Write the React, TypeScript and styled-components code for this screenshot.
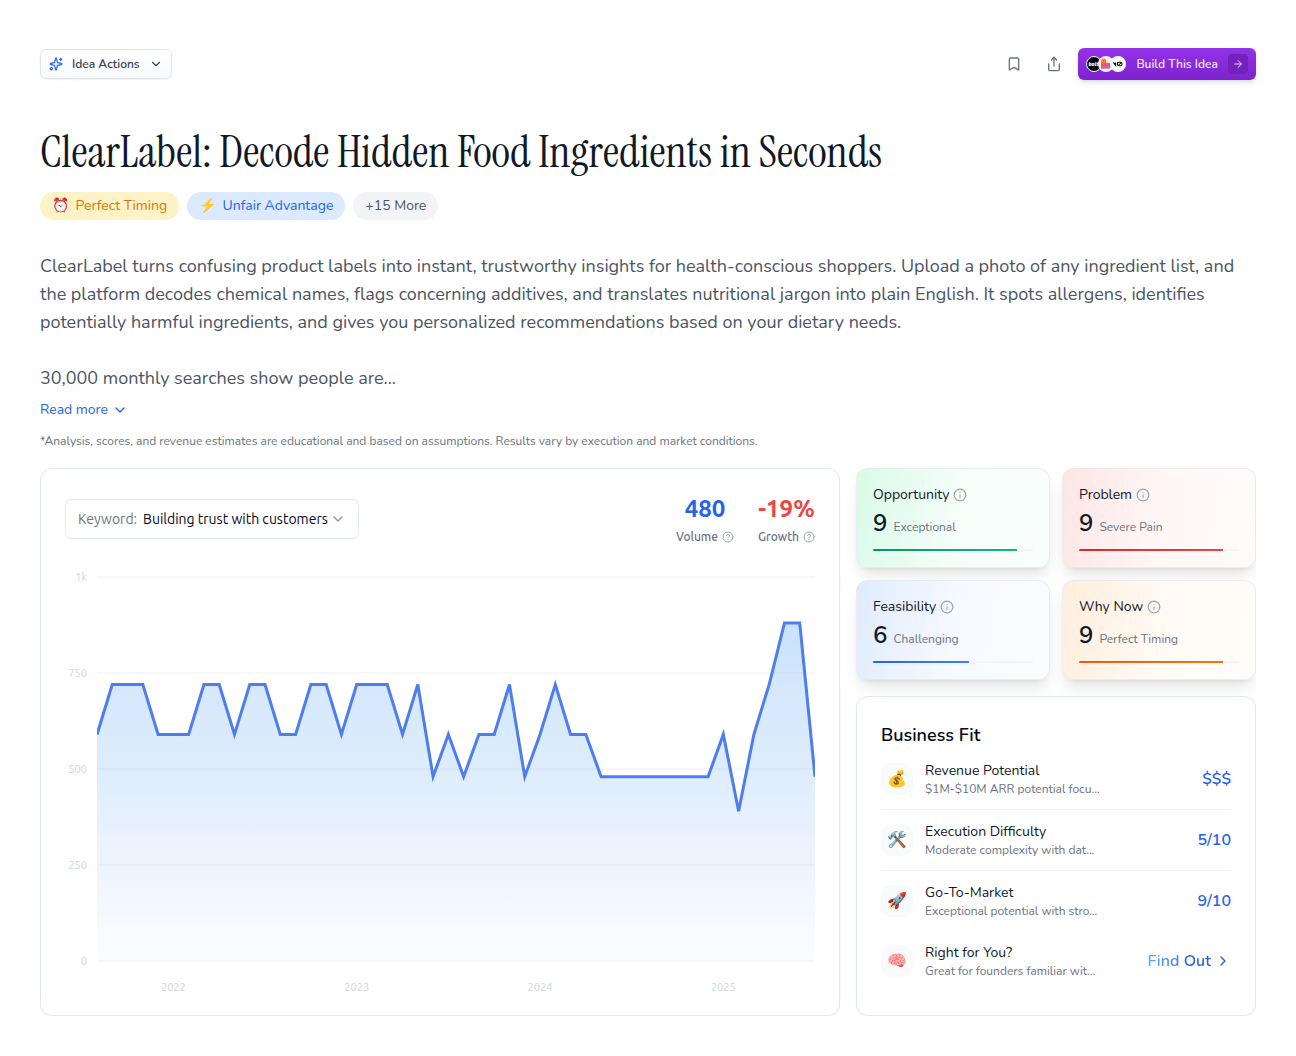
import React from "react";
import styled, { createGlobalStyle } from "styled-components";
import {
  ArrowRight,
  Bookmark,
  ChevronDown,
  ChevronRight,
  CircleHelp,
  Info,
  Share,
  Sparkles,
} from "lucide-react";

const sans = `Nunito, "Open Sans", "Noto Color Emoji", sans-serif`;
const chartSans = `Ubuntu, "Noto Sans", sans-serif`;
const serif = `"Instrument Serif", "Liberation Serif", serif`;

const GlobalStyle = createGlobalStyle`
  *, *::before, *::after { box-sizing: border-box; }
  body { margin: 0; background: #fff; color: #0f172a; font-family: ${sans}; }
  h1, h2, h3, p, ul { margin: 0; padding: 0; }
  button, select { font-family: inherit; cursor: pointer; }
`;

const Page = styled.main`
  padding: 48px 40px 40px;
`;

/* ---------- Toolbar ---------- */

const Toolbar = styled.div`
  display: flex;
  align-items: center;
  justify-content: space-between;
`;

const ToolbarGroup = styled.div`
  display: flex;
  align-items: center;
  gap: 8px;
`;

const ActionsButton = styled.button`
  display: flex;
  align-items: center;
  gap: 9px;
  height: 30px;
  padding: 0 8px;
  border: 1px solid #e2e5ee;
  border-radius: 6px;
  background: linear-gradient(#fff, #f8fafc);
  box-shadow: 0 1px 2px rgba(0, 0, 0, 0.05);
  color: #374151;
  font-size: 12px;
  font-weight: 600;
`;

const IconButton = styled.button`
  display: grid;
  place-items: center;
  width: 32px;
  height: 32px;
  padding: 0;
  border: 0;
  border-radius: 6px;
  background: none;
  color: #6b7280;
`;

const BuildButton = styled.button`
  display: flex;
  align-items: center;
  gap: 10px;
  height: 32px;
  padding: 0 8px;
  border: 0;
  border-radius: 6px;
  background: linear-gradient(#9333ea, #7e22ce);
  box-shadow: 0 4px 6px -1px rgba(0, 0, 0, 0.1), 0 2px 4px -2px rgba(0, 0, 0, 0.1);
  color: #f3e8ff;
  font-size: 12px;
  font-weight: 600;
`;

const ToolLogos = styled.span`
  display: flex;

  svg + svg {
    margin-left: -4px;
  }
`;

const ArrowBox = styled.span`
  display: grid;
  place-items: center;
  width: 20px;
  height: 20px;
  border-radius: 4px;
  background: #7420ba;
  color: #e9d5ff;
`;

/* ---------- Heading ---------- */

const Title = styled.h1`
  margin-top: 48px;
  color: #111827;
  font-family: ${serif};
  font-size: 45px;
  font-weight: 400;
  line-height: 48px;
`;

const Tags = styled.div`
  display: flex;
  flex-wrap: wrap;
  gap: 8px;
  margin-top: 16px;
`;

const tagTones = {
  amber: ["#fef3c7", "#d97706"],
  blue: ["#dbeafe", "#2563eb"],
  gray: ["#f3f4f6", "#4b5563"],
};

const Tag = styled.button<{ $tone: keyof typeof tagTones }>`
  display: flex;
  align-items: flex-start;
  gap: 6px;
  height: 28px;
  padding: 4px 12px;
  border: 0;
  border-radius: 14px;
  background: ${(p) => tagTones[p.$tone][0]};
  color: ${(p) => tagTones[p.$tone][1]};
  font-size: 14px;
  line-height: 20px;
`;

const Summary = styled.p`
  margin-top: 32px;
  color: #4b5563;
  font-size: 18px;
  line-height: 28px;

  & + & {
    margin-top: 28px;
  }
`;

const ReadMore = styled.button`
  display: flex;
  align-items: center;
  gap: 4px;
  margin-top: 8px;
  padding: 0;
  border: 0;
  background: none;
  color: #2563eb;
  font-size: 14px;
  line-height: 20px;
`;

const Disclaimer = styled.p`
  margin-top: 12px;
  color: #6b7280;
  font-size: 12px;
  line-height: 18px;
`;

/* ---------- Dashboard ---------- */

const Dashboard = styled.section`
  display: grid;
  grid-template-columns: minmax(0, 2fr) minmax(0, 1fr);
  gap: 16px;
  margin-top: 18px;
  overflow: hidden;
`;

const Card = styled.div`
  border: 1px solid #e2e8f0;
  border-radius: 12px;
  background: #fff;
  box-shadow: 0 1px 2px rgba(0, 0, 0, 0.05);
`;

const ChartCard = styled(Card)`
  display: flex;
  flex-direction: column;
  padding: 24px 24px 20px;
  font-family: ${chartSans};
`;

const ChartHeader = styled.div`
  display: flex;
  align-items: center;
  justify-content: space-between;
  gap: 24px;
`;

const KeywordField = styled.label`
  display: flex;
  align-items: center;
  height: 40px;
  padding: 0 12px;
  border: 1px solid #e2e8f0;
  border-radius: 6px;
  color: #6b7280;
  font-size: 14px;
`;

const KeywordSelect = styled.select`
  margin: 0 2px 0 6px;
  padding: 0;
  border: 0;
  outline: 0;
  appearance: none;
  background: none;
  color: #020617;
  font-size: 14px;
`;

const MutedIcon = styled.span`
  display: flex;
  color: #8b929e;
`;

const Stats = styled.div`
  display: flex;
  gap: 24px;
`;

const Stat = styled.div`
  text-align: center;
`;

const StatValue = styled.div<{ $negative?: boolean }>`
  color: ${(p) => (p.$negative ? "#ef4444" : "#2563eb")};
  font-size: 24px;
  font-weight: 700;
  line-height: 32px;
`;

const StatLabel = styled.div`
  display: flex;
  align-items: center;
  gap: 4px;
  margin-top: 4px;
  color: #6b7280;
  font-size: 12px;
  font-weight: 500;
  line-height: 16px;
`;

const ChartBody = styled.div`
  display: grid;
  grid-template-columns: 22px minmax(0, 1fr);
  column-gap: 10px;
  row-gap: 18px;
  margin-top: 32px;
  color: #cbd5e1;
  font-size: 11px;
  line-height: 16px;
`;

const YAxis = styled.div`
  display: flex;
  flex-direction: column;
  justify-content: space-between;
  margin: -8px 0;
  text-align: right;
`;

const XAxis = styled.div`
  display: grid;
  grid-column: 2;
  grid-template-columns: repeat(47, minmax(0, 1fr));
  text-align: center;
`;

const Year = styled.span<{ $center: number }>`
  grid-column: ${(p) => p.$center - 3} / ${(p) => p.$center + 5};
  grid-row: 1;
`;

const PlotFrame = styled.div`
  height: 384px;
  overflow-x: clip;
  overflow-y: visible;
`;

const Plot = styled.svg`
  display: block;
  width: 100%;
  height: 100%;
  overflow: visible;
`;

/* ---------- Scores ---------- */

const Side = styled.div`
  display: flex;
  flex-direction: column;
  gap: 16px;
`;

const ScoreGrid = styled.div`
  display: grid;
  grid-template-columns: 1fr 1fr;
  gap: 12px;
`;

const ScoreCard = styled.article<{ $wash: string }>`
  padding: 16px;
  border: 1px solid rgba(226, 232, 240, 0.7);
  border-radius: 12px;
  background: linear-gradient(100deg, ${(p) => p.$wash});
  box-shadow: 0 10px 15px -3px rgba(0, 0, 0, 0.1), 0 4px 6px -4px rgba(0, 0, 0, 0.1);
`;

const ScoreTitle = styled.h3`
  display: flex;
  align-items: center;
  gap: 4px;
  font-size: 14px;
  font-weight: 400;
  line-height: 20px;
`;

const ScoreLine = styled.div`
  display: flex;
  align-items: baseline;
  gap: 6px;
  margin: 2px 0 10px;
`;

const ScoreNumber = styled.span`
  color: #111827;
  font-size: 24px;
  font-weight: 600;
  line-height: 32px;
`;

const ScoreNote = styled.span`
  color: #6b7280;
  font-size: 12px;
  line-height: 16px;
`;

const Track = styled.div`
  height: 2px;
  border-radius: 1px;
  background: #f3f4f6;
  overflow: hidden;
`;

const Fill = styled.div<{ $bar: string }>`
  height: 100%;
  background: linear-gradient(90deg, ${(p) => p.$bar});
`;

/* ---------- Business fit ---------- */

const FitCard = styled(Card)`
  padding: 24px;
`;

const FitHeading = styled.h2`
  color: #020617;
  font-size: 18px;
  font-weight: 600;
  line-height: 28px;
`;

const FitList = styled.ul`
  list-style: none;
`;

const FitRow = styled.li<{ $divided: boolean }>`
  display: flex;
  align-items: center;
  gap: 12px;
  padding: 12px 0;
  border-bottom: ${(p) => (p.$divided ? "1px solid #f3f4f6" : "0")};
`;

const FitIcon = styled.span`
  display: grid;
  place-items: center;
  flex: none;
  width: 32px;
  height: 32px;
  border-radius: 10px;
  background: #f9fafb;
  font-size: 16px;
  line-height: 24px;
`;

const FitText = styled.div`
  flex: 1;
  min-width: 0;
`;

const FitName = styled.h3`
  color: #111827;
  font-size: 14px;
  font-weight: 400;
  line-height: 20px;
`;

const FitNote = styled.p`
  color: #6b7280;
  font-size: 12px;
  line-height: 16px;
`;

const FitValue = styled.span`
  color: #2563eb;
  font-size: 16px;
  font-weight: 600;
`;

const FindOut = styled.button`
  display: flex;
  align-items: center;
  gap: 4px;
  padding: 0;
  border: 0;
  background: none;
  color: #2563eb;
  font-size: 16px;
  font-weight: 600;
`;

const Shimmer = styled.span`
  background: linear-gradient(90deg, #60a5fa, #3b82f6 50%, #2563eb 60%);
  background-clip: text;
  color: transparent;
`;

/* ---------- Data ---------- */

const volumes = [
  590, 720, 720, 720, 590, 590, 590, 720, 720, 590, 720, 720, 590, 590, 720, 720,
  590, 720, 720, 720, 590, 720, 480, 590, 480, 590, 590, 720, 480, 590, 720, 590,
  590, 480, 480, 480, 480, 480, 480, 480, 480, 590, 390, 590, 720, 880, 880, 480,
];

const years: [string, number][] = [
  ["2022", 5],
  ["2023", 17],
  ["2024", 29],
  ["2025", 41],
];

const scores = [
  { name: "Opportunity", value: 9, note: "Exceptional", wash: "#d8fbe7, #f5fdf9 50%, #fafefd", bar: "#059669, #10b981" },
  { name: "Problem", value: 9, note: "Severe Pain", wash: "#fee5e5, #fef7f6 50%, #fefbfb", bar: "#dc2626, #ef4444" },
  { name: "Feasibility", value: 6, note: "Challenging", wash: "#dfecfe, #f6f9ff 50%, #fbfcff", bar: "#2563eb, #3b82f6" },
  { name: "Why Now", value: 9, note: "Perfect Timing", wash: "#ffeedb, #fffaf4 50%, #fffdfa", bar: "#ea580c, #f97316" },
];

const fits = [
  { icon: "💰", name: "Revenue Potential", note: "$1M-$10M ARR potential focu...", value: "$$$" },
  { icon: "🛠️", name: "Execution Difficulty", note: "Moderate complexity with dat...", value: "5/10" },
  { icon: "🚀", name: "Go-To-Market", note: "Exceptional potential with stro...", value: "9/10" },
  { icon: "🧠", name: "Right for You?", note: "Great for founders familiar wit...", value: null },
];

/* ---------- Pieces ---------- */

const logoFont = `Nunito, "Open Sans", sans-serif`;

function Logos() {
  return (
    <ToolLogos aria-hidden="true">
      <svg width="16" height="16" viewBox="0 0 16 16">
        <circle cx="8" cy="8" r="7.5" fill="#000" stroke="#fff" />
        <text x="7.4" y="9.6" textAnchor="middle" fontFamily={logoFont} fontSize="5" fontWeight="900" fontStyle="italic" fill="#fff">
          bolt
        </text>
      </svg>
      <svg width="16" height="16" viewBox="0 0 16 16">
        <defs>
          <linearGradient id="heart" x1="0.3" y1="0" x2="0.6" y2="1">
            <stop offset="0.25" stopColor="#ff7a1a" />
            <stop offset="0.6" stopColor="#fb4f5a" />
            <stop offset="0.95" stopColor="#8c7bff" />
          </linearGradient>
        </defs>
        <circle cx="8" cy="8" r="8" fill="#f4f0fb" />
        <path d="M3 5.2A2.6 2.6 0 0 1 8.2 5.2V6.8H10A3 3 0 0 1 10 12.8H3Z" fill="url(#heart)" />
      </svg>
      <svg width="16" height="16" viewBox="0 0 16 16">
        <circle cx="8" cy="8" r="8" fill="#fff" />
        <path d="M3.4 6.4L5.6 9.4V6.4" fill="none" stroke="#000" strokeWidth="1.1" />
        <rect x="7.4" y="6.2" width="4.6" height="3.6" rx="1.5" fill="none" stroke="#000" strokeWidth="1.1" />
        <path d="M8 9.6L11.6 6.4" stroke="#000" strokeWidth="1" />
      </svg>
    </ToolLogos>
  );
}

function VolumeChart() {
  const points = volumes.map((v, i) => `${i},${1000 - v}`).join(" ");
  return (
    <PlotFrame>
      <Plot viewBox="0 0 47 1000" preserveAspectRatio="none" role="img" aria-label="Search volume by month">
        <defs>
          <linearGradient id="area" gradientUnits="userSpaceOnUse" x1="0" y1="120" x2="0" y2="1000">
            <stop offset="0" stopColor="#cae2fb" />
            <stop offset="0.2" stopColor="#d5e8fc" />
            <stop offset="0.45" stopColor="#deedfc" />
            <stop offset="0.7" stopColor="#edf4fe" />
            <stop offset="1" stopColor="#fcfdff" />
          </linearGradient>
        </defs>
        <polygon points={`0,1000 ${points} 47,1000`} fill="url(#area)" />
        {[0, 250, 500, 750, 1000].map((y) => (
          <line key={y} x1="0" x2="47" y1={y} y2={y} stroke="#64748b" strokeOpacity="0.05" strokeWidth="2" vectorEffect="non-scaling-stroke" />
        ))}
        <polyline points={points} fill="none" stroke="#4f7df0" strokeWidth="3" strokeMiterlimit="4" vectorEffect="non-scaling-stroke" />
      </Plot>
    </PlotFrame>
  );
}

export default function App() {
  return (
    <Page>
      <GlobalStyle />
      <Toolbar>
        <ActionsButton>
          <Sparkles size={14} color="#2563eb" />
          Idea Actions
          <ChevronDown size={14} />
        </ActionsButton>
        <ToolbarGroup>
          <IconButton aria-label="Save idea">
            <Bookmark size={16} />
          </IconButton>
          <IconButton aria-label="Share idea">
            <Share size={16} />
          </IconButton>
          <BuildButton>
            <Logos />
            Build This Idea
            <ArrowBox>
              <ArrowRight size={12} />
            </ArrowBox>
          </BuildButton>
        </ToolbarGroup>
      </Toolbar>

      <Title>ClearLabel: Decode Hidden Food Ingredients in Seconds</Title>
      <Tags>
        <Tag $tone="amber">
          <span>⏰</span>
          <span>Perfect Timing</span>
        </Tag>
        <Tag $tone="blue">
          <span>⚡</span>
          <span>Unfair Advantage</span>
        </Tag>
        <Tag $tone="gray">+15 More</Tag>
      </Tags>

      <Summary>
        ClearLabel turns confusing product labels into instant, trustworthy insights for health-conscious shoppers.
        Upload a photo of any ingredient list, and the platform decodes chemical names, flags concerning additives, and
        translates nutritional jargon into plain English. It spots allergens, identifies potentially harmful
        ingredients, and gives you personalized recommendations based on your dietary needs.
      </Summary>
      <Summary>30,000 monthly searches show people are...</Summary>
      <ReadMore>
        Read more
        <ChevronDown size={16} />
      </ReadMore>
      <Disclaimer>
        *Analysis, scores, and revenue estimates are educational and based on assumptions. Results vary by execution and
        market conditions.
      </Disclaimer>

      <Dashboard>
        <ChartCard>
          <ChartHeader>
            <KeywordField>
              Keyword:
              <KeywordSelect defaultValue="trust">
                <option value="trust">Building trust with customers</option>
              </KeywordSelect>
              <MutedIcon>
                <ChevronDown size={16} />
              </MutedIcon>
            </KeywordField>
            <Stats>
              <Stat>
                <StatValue>480</StatValue>
                <StatLabel>
                  Volume <CircleHelp size={12} color="#9ca3af" />
                </StatLabel>
              </Stat>
              <Stat>
                <StatValue $negative>-19%</StatValue>
                <StatLabel>
                  Growth <CircleHelp size={12} color="#9ca3af" />
                </StatLabel>
              </Stat>
            </Stats>
          </ChartHeader>
          <ChartBody>
            <YAxis>
              {["1k", "750", "500", "250", "0"].map((label) => (
                <span key={label}>{label}</span>
              ))}
            </YAxis>
            <VolumeChart />
            <XAxis>
              {years.map(([label, center]) => (
                <Year key={label} $center={center}>
                  {label}
                </Year>
              ))}
            </XAxis>
          </ChartBody>
        </ChartCard>

        <Side>
          <ScoreGrid>
            {scores.map((s) => (
              <ScoreCard key={s.name} $wash={s.wash}>
                <ScoreTitle>
                  {s.name}
                  <Info size={14} color="#9ca3af" />
                </ScoreTitle>
                <ScoreLine>
                  <ScoreNumber>{s.value}</ScoreNumber>
                  <ScoreNote>{s.note}</ScoreNote>
                </ScoreLine>
                <Track>
                  <Fill $bar={s.bar} style={{ width: `${s.value * 10}%` }} />
                </Track>
              </ScoreCard>
            ))}
          </ScoreGrid>

          <FitCard>
            <FitHeading>Business Fit</FitHeading>
            <FitList>
              {fits.map((f, i) => (
                <FitRow key={f.name} $divided={i < 2}>
                  <FitIcon>{f.icon}</FitIcon>
                  <FitText>
                    <FitName>{f.name}</FitName>
                    <FitNote>{f.note}</FitNote>
                  </FitText>
                  {f.value ? (
                    <FitValue>{f.value}</FitValue>
                  ) : (
                    <FindOut>
                      <Shimmer>Find Out</Shimmer>
                      <ChevronRight size={16} />
                    </FindOut>
                  )}
                </FitRow>
              ))}
            </FitList>
          </FitCard>
        </Side>
      </Dashboard>
    </Page>
  );
}
